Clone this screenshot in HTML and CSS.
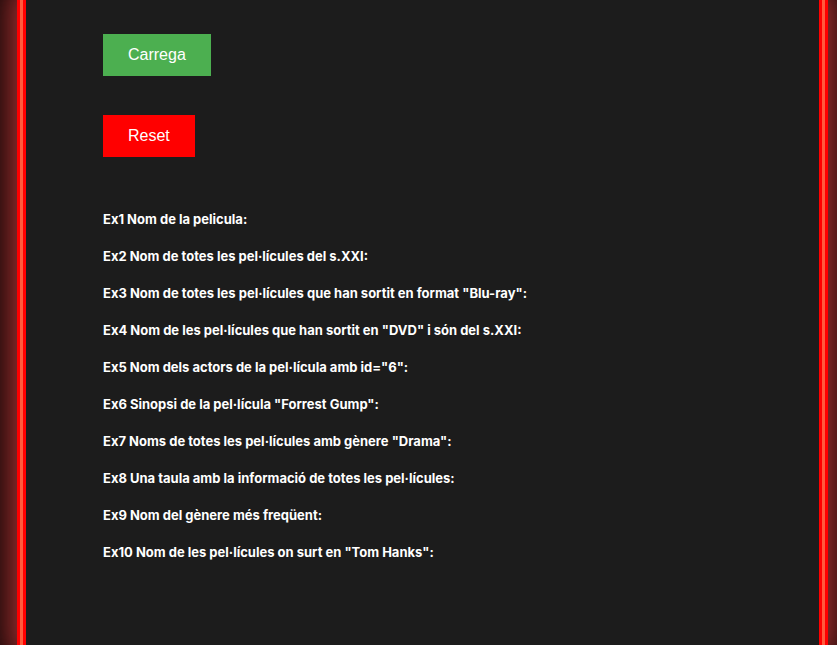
FILE: index.html
```html
<!DOCTYPE html>
<html>
<head>
<meta charset="utf-8">
<link rel="stylesheet" href="styles.css">
</head>
<body>
<div class="frame">
  <div class="buttons">
    <button class="btn btn-load">Carrega</button>
    <button class="btn btn-reset">Reset</button>
  </div>
  <div class="exercises">
    <div class="ex">Ex1 Nom de la pelicula:</div>
    <div class="ex">Ex2 Nom de totes les pel·lícules del s.XXI:</div>
    <div class="ex">Ex3 Nom de totes les pel·lícules que han sortit en format "Blu-ray":</div>
    <div class="ex">Ex4 Nom de les pel·lícules que han sortit en "DVD" i són del s.XXI:</div>
    <div class="ex">Ex5 Nom dels actors de la pel·lícula amb id="6":</div>
    <div class="ex">Ex6 Sinopsi de la pel·lícula "Forrest Gump":</div>
    <div class="ex">Ex7 Noms de totes les pel·lícules amb gènere "Drama":</div>
    <div class="ex">Ex8 Una taula amb la informació de totes les pel·lícules:</div>
    <div class="ex">Ex9 Nom del gènere més freqüent:</div>
    <div class="ex">Ex10 Nom de les pel·lícules on surt en "Tom Hanks":</div>
  </div>
</div>
</body>
</html>
```
FILE: styles.css
```css
html, body {
  margin: 0;
  padding: 0;
  height: 100%;
  overflow: hidden;
}
body {
  background: #0e0606;
}
.frame {
  box-sizing: border-box;
  margin-left: 23px;
  width: 799px;
  height: 645px;
  background: #1c1c1c;
  border-left: 3px solid #ff0000;
  border-right: 3px solid #ff0000;
  box-shadow: 0 0 0 3px #ff5a3c, 0 0 0 6px #ff0000, 0 0 30px 15px rgba(170, 50, 50, 0.95);
  padding: 34px 0 0 77px;
}
.buttons {
  display: flex;
  flex-direction: column;
  align-items: flex-start;
  gap: 39px;
}
.btn {
  border: none;
  color: #ffffff;
  font-family: "Liberation Sans", Arial, sans-serif;
  font-size: 16px;
  line-height: 18px;
  padding: 12px 25px;
  margin: 0;
}
.btn-load { background: #4caf50; }
.btn-reset { background: #ff0000; }
.exercises {
  margin-top: 54px;
  display: flex;
  flex-direction: column;
  gap: 21px;
}
.ex {
  font-family: Inter, sans-serif;
  font-weight: 750;
  font-size: 13px;
  line-height: 16px;
  color: #ffffff;
}
```
